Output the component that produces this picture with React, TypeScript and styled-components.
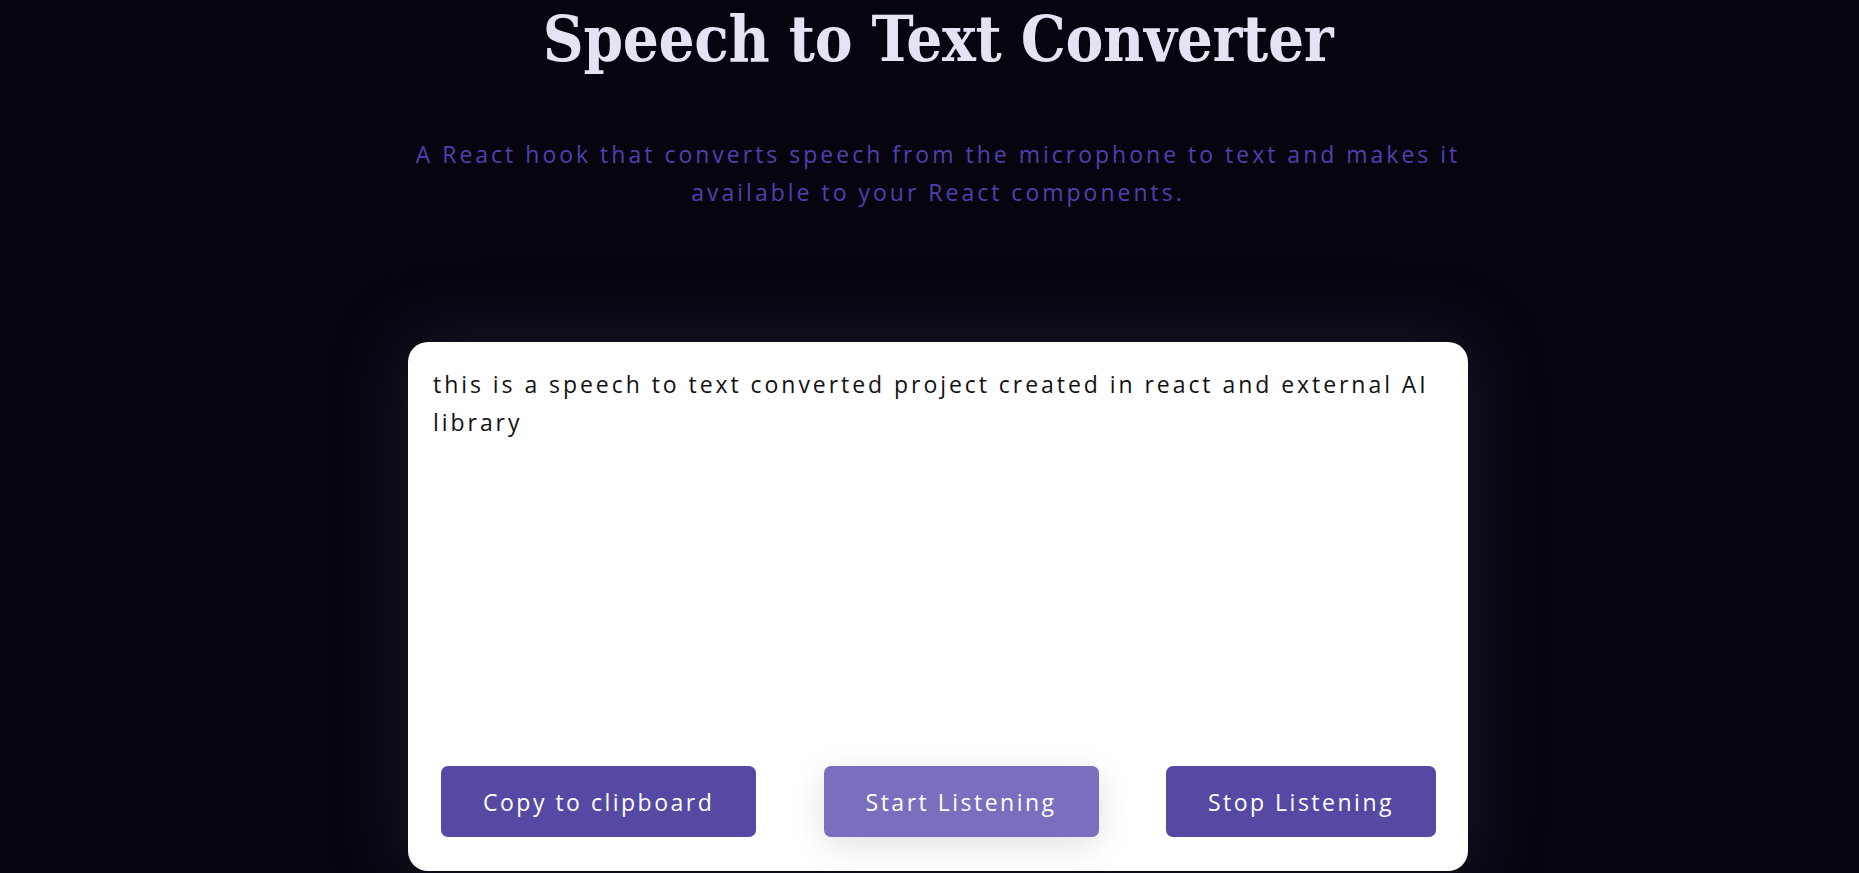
import React from "react";
import styled, { createGlobalStyle } from "styled-components";

const Global = createGlobalStyle`
  html, body { margin: 0; padding: 0; background: #06050f; }
  body { font-family: "Open Sans", "Liberation Sans", sans-serif; }
  * { box-sizing: border-box; }
`;

const Page = styled.main`
  min-height: 873px;
  display: flex;
  flex-direction: column;
  align-items: center;
  padding-left: 17px;
  background: #06050f;
  overflow: hidden;
`;

const Title = styled.h1`
  margin: 0;
  font-family: "DejaVu Serif Condensed", "DejaVu Serif", "Liberation Serif", serif;
  font-stretch: condensed;
  font-weight: 700;
  font-size: 63px;
  line-height: 78px;
  color: #e4e2f3;
  letter-spacing: -0.3px;
`;

const Subtitle = styled.p`
  margin: 57px 0 0;
  width: 1060px;
  text-align: center;
  font-family: "Open Sans", "Liberation Sans", sans-serif;
  font-weight: 400;
  font-size: 23px;
  line-height: 38px;
  letter-spacing: 3px;
  color: #4f40b0;
`;

const Card = styled.section`
  margin-top: 131px;
  width: 1060px;
  height: 529px;
  background: #ffffff;
  border-radius: 20px;
  display: flex;
  flex-direction: column;
  padding: 23px 32px 34px 25px;
  box-shadow: 0 0 70px 6px rgba(70, 68, 100, 0.28);
`;

const Transcript = styled.div`
  flex: 1;
  font-family: "Open Sans", "Liberation Sans", sans-serif;
  font-size: 23px;
  line-height: 38px;
  letter-spacing: 2.95px;
  color: #111111;
`;

const Actions = styled.div`
  display: flex;
  justify-content: space-between;
  align-items: center;
  padding-left: 8px;
`;

const Button = styled.button<{ $active?: boolean }>`
  height: 71px;
  padding: 0 42px;
  border: none;
  border-radius: 7px;
  background: ${(p) => (p.$active ? "#7a6ebf" : "#5549a3")};
  color: #ffffff;
  font-family: "Open Sans", "Liberation Sans", sans-serif;
  font-size: 23px;
  letter-spacing: 2.5px;
  cursor: pointer;
  box-shadow: ${(p) => (p.$active ? "0 8px 34px rgba(0, 0, 0, 0.12)" : "none")};
`;

export default function App() {
  return (
    <>
      <Global />
      <Page>
        <Title>Speech to Text Converter</Title>
        <Subtitle>
          A React hook that converts speech from the microphone to text and makes it available to
          your React components.
        </Subtitle>
        <Card>
          <Transcript>
            this is a speech to text converted project created in react and external AI library
          </Transcript>
          <Actions>
            <Button>Copy to clipboard</Button>
            <Button $active>Start Listening</Button>
            <Button>Stop Listening</Button>
          </Actions>
        </Card>
      </Page>
    </>
  );
}
